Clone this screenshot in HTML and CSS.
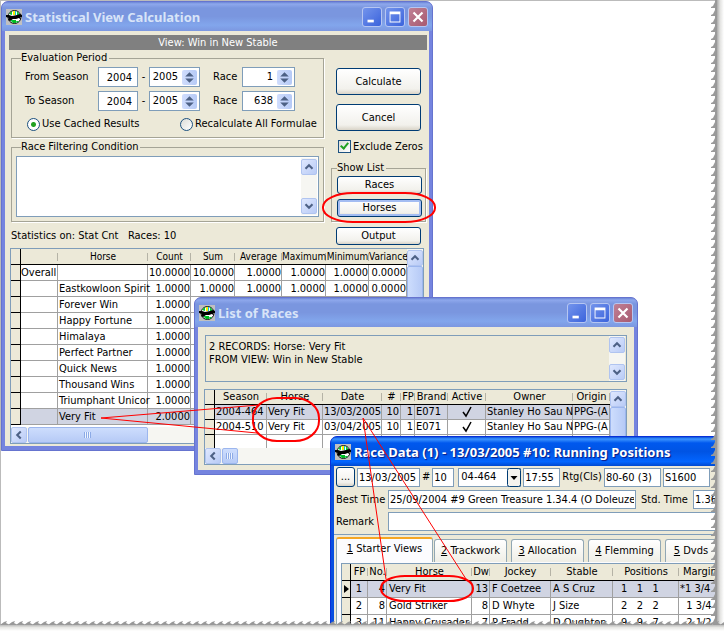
FILE: index.html
```
<!DOCTYPE html>
<html lang="en">
<head>
    <meta charset="UTF-8">
    <meta name="viewport" content="width=device-width, initial-scale=1.0">
    <title>Statistical View Calculation</title>
    <link rel="stylesheet" href="styles.css">
</head>
<body>

    <!-- shared icons -->
    <svg class="defs" width="0" height="0">
        <symbol id="app" viewBox="0 0 16 16">
            <rect width="16" height="16" fill="#c0c0c0"/>
            <circle cx="8.5" cy="8" r="6.5" fill="#fff" stroke="#111" stroke-width="1"/>
            <path d="M3 5l3-3v4zM11 2l3 4h-3zM4 11l3 3v-3zM10 12h3l-2 2z" fill="#0c3"/>
            <path d="M7 2h3v4H7z" fill="#fe0"/>
            <path d="M9 2h1v4H9z" fill="#0cd"/>
            <path d="M0 6l3 0 3 1 5-1 3-1 2 1v2l-2 0 1 3-2-2-3 1-3 0-3 2-2-1 1-2-3-1z" fill="#000"/>
            <path d="M7 11h3v3H7z" fill="#0b2"/>
        </symbol>
        <symbol id="min" viewBox="0 0 20 20"><path d="M5 13h7v3H5z" fill="#fff"/></symbol>
        <symbol id="max" viewBox="0 0 20 20"><path d="M4 4h12v12H4zM5 7v8h10V7z" fill="#fff" fill-rule="evenodd"/></symbol>
        <symbol id="close" viewBox="0 0 20 20"><path d="M5 5l10 10M15 5L5 15" stroke="#fff" stroke-width="2.4"/></symbol>
        <symbol id="up" viewBox="0 0 16 16"><path d="M4 10l4-4 4 4" fill="none" stroke="#4d6185" stroke-width="2.4"/></symbol>
        <symbol id="down" viewBox="0 0 16 16"><path d="M4 6l4 4 4-4" fill="none" stroke="#4d6185" stroke-width="2.4"/></symbol>
        <symbol id="left" viewBox="0 0 16 16"><path d="M10 4L6 8l4 4" fill="none" stroke="#4d6185" stroke-width="2.4"/></symbol>
        <symbol id="grip" viewBox="0 0 8 8"><path d="M.5 1v6M2.5 1v6M4.5 1v6M6.5 1v6" stroke="#8caae6"/><path d="M1.5 1v6M3.5 1v6M5.5 1v6" stroke="#eef4fe"/></symbol>
        <symbol id="spin" viewBox="0 0 14 14"><path d="M3 6l4-4 4 4zM3 8l4 4 4-4z" fill="#4d6185"/></symbol>
        <symbol id="tick" viewBox="0 0 12 12"><path d="M2 6l3 4 5-9" fill="none" stroke="#000" stroke-width="1.5"/></symbol>
    </svg>

    <main class="desktop">

        <section class="window calc">
            <header class="titlebar">
                <svg class="app-icon"><use href="#app"/></svg>
                <h1>Statistical View Calculation</h1>
                <button class="cap" aria-label="Minimize"><svg><use href="#min"/></svg></button>
                <button class="cap" aria-label="Maximize"><svg><use href="#max"/></svg></button>
                <button class="cap cap-close" aria-label="Close"><svg><use href="#close"/></svg></button>
            </header>
            <div class="window-body">
                <div class="view-bar">View: Win in New Stable</div>
                <div class="calc-main">
                    <div class="calc-left">
                        <fieldset class="period">
                            <legend>Evaluation Period</legend>
                            <div class="period-grid">
                                <label for="from1">From Season</label>
                                <input id="from1" class="num" value="2004">
                                <span>-</span>
                                <span class="spinner"><input aria-label="From season end" value="2005"><button aria-label="Change"><svg><use href="#spin"/></svg></button></span>
                                <label for="race1">Race</label>
                                <span class="spinner"><input id="race1" value="1"><button aria-label="Change"><svg><use href="#spin"/></svg></button></span>
                                <label for="to1">To Season</label>
                                <input id="to1" class="num" value="2004">
                                <span>-</span>
                                <span class="spinner"><input aria-label="To season end" value="2005"><button aria-label="Change"><svg><use href="#spin"/></svg></button></span>
                                <label for="race2">Race</label>
                                <span class="spinner"><input id="race2" value="638"><button aria-label="Change"><svg><use href="#spin"/></svg></button></span>
                            </div>
                            <div class="radios">
                                <label><input type="radio" name="mode" checked>Use Cached Results</label>
                                <label><input type="radio" name="mode">Recalculate All Formulae</label>
                            </div>
                        </fieldset>
                        <fieldset class="filter">
                            <legend>Race Filtering Condition</legend>
                            <div class="memo">
                                <textarea aria-label="Race Filtering Condition"></textarea>
                                <div class="vscroll">
                                    <button aria-label="Up"><svg><use href="#up"/></svg></button>
                                    <button aria-label="Down"><svg><use href="#down"/></svg></button>
                                </div>
                            </div>
                        </fieldset>
                        <p class="stats">Statistics on: Stat Cnt &nbsp; Races: 10</p>
                    </div>
                    <div class="calc-right">
                        <button class="btn tall">Calculate</button>
                        <button class="btn tall">Cancel</button>
                        <label class="check"><input type="checkbox" checked><span>Exclude Zeros</span></label>
                        <fieldset class="show-list">
                            <legend>Show List</legend>
                            <button class="btn">Races</button>
                            <button class="btn focused">Horses</button>
                        </fieldset>
                        <button class="btn">Output</button>
                    </div>
                </div>
                <div class="grid calc-grid">
                    <div class="grid-view">
                        <table>
                            <colgroup><col style="width:10px"><col style="width:37px"><col style="width:90px"><col style="width:43px"><col style="width:44px"><col style="width:47px"><col style="width:44px"><col style="width:43px"><col></colgroup>
                            <thead>
                                <tr><th></th><th></th><th>Horse</th><th>Count</th><th>Sum</th><th>Average</th><th>Maximum</th><th>Minimum</th><th>Variance</th></tr>
                            </thead>
                            <tbody>
                                <tr><td></td><td>Overall</td><td></td><td>10.0000</td><td>10.0000</td><td>1.0000</td><td>1.0000</td><td>1.0000</td><td>0.0000</td></tr>
                                <tr><td></td><td></td><td>Eastkowloon Spirit</td><td>1.0000</td><td>1.0000</td><td>1.0000</td><td>1.0000</td><td>1.0000</td><td>0.0000</td></tr>
                                <tr><td></td><td></td><td>Forever Win</td><td>1.0000</td><td></td><td></td><td></td><td></td><td></td></tr>
                                <tr><td></td><td></td><td>Happy Fortune</td><td>1.0000</td><td></td><td></td><td></td><td></td><td></td></tr>
                                <tr><td></td><td></td><td>Himalaya</td><td>1.0000</td><td></td><td></td><td></td><td></td><td></td></tr>
                                <tr><td></td><td></td><td>Perfect Partner</td><td>1.0000</td><td></td><td></td><td></td><td></td><td></td></tr>
                                <tr><td></td><td></td><td>Quick News</td><td>1.0000</td><td></td><td></td><td></td><td></td><td></td></tr>
                                <tr><td></td><td></td><td>Thousand Wins</td><td>1.0000</td><td></td><td></td><td></td><td></td><td></td></tr>
                                <tr><td></td><td></td><td>Triumphant Unicor</td><td>1.0000</td><td></td><td></td><td></td><td></td><td></td></tr>
                                <tr class="selected"><td></td><td></td><td>Very Fit</td><td>2.0000</td><td></td><td></td><td></td><td></td><td></td></tr>
                            </tbody>
                        </table>
                    </div>
                    <div class="vscroll">
                        <button aria-label="Up"><svg><use href="#up"/></svg></button>
                        <div class="thumb"></div>
                    </div>
                    <div class="hscroll">
                        <button aria-label="Left"><svg><use href="#left"/></svg></button>
                        <div class="thumb wide"><svg><use href="#grip"/></svg></div>
                    </div>
                </div>
            </div>
        </section>

        <section class="window races">
            <header class="titlebar">
                <svg class="app-icon"><use href="#app"/></svg>
                <h1>List of Races</h1>
                <button class="cap" aria-label="Minimize"><svg><use href="#min"/></svg></button>
                <button class="cap" aria-label="Maximize"><svg><use href="#max"/></svg></button>
                <button class="cap cap-close" aria-label="Close"><svg><use href="#close"/></svg></button>
            </header>
            <div class="window-body">
                <div class="summary">
                    <p>2 RECORDS: Horse: Very Fit<br>FROM VIEW: Win in New Stable</p>
                    <div class="vscroll">
                        <button aria-label="Up"><svg><use href="#up"/></svg></button>
                        <button aria-label="Down"><svg><use href="#down"/></svg></button>
                    </div>
                </div>
                <div class="grid races-grid">
                    <div class="grid-view">
                        <table>
                            <colgroup><col style="width:10px"><col style="width:52px"><col style="width:56px"><col style="width:59px"><col style="width:19px"><col style="width:14px"><col style="width:33px"><col style="width:38px"><col style="width:87px"><col></colgroup>
                            <thead>
                                <tr><th></th><th>Season</th><th>Horse</th><th>Date</th><th>#</th><th>FP</th><th>Brand</th><th>Active</th><th>Owner</th><th>Origin</th></tr>
                            </thead>
                            <tbody>
                                <tr class="selected"><td></td><td>2004-464</td><td>Very Fit</td><td>13/03/2005</td><td>10</td><td>1</td><td>E071</td><td><svg class="tick"><use href="#tick"/></svg></td><td>Stanley Ho Sau N</td><td>PPG-(A</td></tr>
                                <tr><td></td><td>2004-510</td><td>Very Fit</td><td>03/04/2005</td><td>10</td><td>1</td><td>E071</td><td><svg class="tick"><use href="#tick"/></svg></td><td>Stanley Ho Sau N</td><td>PPG-(A</td></tr>
                                <tr><td></td><td></td><td></td><td></td><td></td><td></td><td></td><td></td><td></td><td></td></tr>
                            </tbody>
                        </table>
                    </div>
                    <div class="vscroll">
                        <button aria-label="Up"><svg><use href="#up"/></svg></button>
                        <div class="thumb"></div>
                    </div>
                    <div class="hscroll">
                        <button aria-label="Left"><svg><use href="#left"/></svg></button>
                        <div class="thumb"><svg><use href="#grip"/></svg></div>
                    </div>
                </div>
            </div>
        </section>

        <section class="window active data">
            <header class="titlebar">
                <svg class="app-icon"><use href="#app"/></svg>
                <h1>Race Data (1) - 13/03/2005 #10: Running Positions</h1>
            </header>
            <div class="window-body">
                <div class="fields">
                    <button class="btn more">...</button>
                    <input class="w-date" aria-label="Date" value="13/03/2005">
                    <label for="raceno">#</label>
                    <input id="raceno" class="w-no" value="10">
                    <span class="combo">
                        <select aria-label="Race index"><option>04-464</option></select>
                        <svg class="combo-arrow" viewBox="0 0 14 19"><rect x=".5" y=".5" width="13" height="18" rx="2" fill="#f4f3ee" stroke="#003c74"/><path d="M3.500 8h7l-3.500 4z"/></svg>
                    </span>
                    <input class="w-time" aria-label="Time" value="17:55">
                    <label for="rtg">Rtg(Cls)</label>
                    <input id="rtg" class="w-rtg" value="80-60 (3)">
                    <input class="w-dist" aria-label="Distance" value="S1600">
                </div>
                <div class="fields">
                    <label class="lead" for="best">Best Time</label>
                    <input id="best" class="w-best" value="25/09/2004 #9 Green Treasure 1.34.4 (O Doleuze">
                    <label class="std" for="std">Std. Time</label>
                    <input id="std" class="w-rest" value="1.36.0">
                </div>
                <div class="fields">
                    <label class="lead" for="remark">Remark</label>
                    <input id="remark" class="w-rest">
                </div>
                <nav class="tabs">
                    <button class="tab current"><u>1</u> Starter Views</button>
                    <button class="tab"><u>2</u> Trackwork</button>
                    <button class="tab"><u>3</u> Allocation</button>
                    <button class="tab"><u>4</u> Flemming</button>
                    <button class="tab short"><u>5</u> Dvds</button>
                </nav>
                <div class="tab-page">
                    <div class="grid data-grid">
                        <table>
                            <colgroup><col style="width:9px"><col style="width:17px"><col style="width:19px"><col style="width:85px"><col style="width:18px"><col style="width:61px"><col style="width:62px"><col style="width:66px"><col></colgroup>
                            <thead>
                                <tr><th></th><th>FP</th><th>No.</th><th>Horse</th><th>Dw</th><th>Jockey</th><th>Stable</th><th>Positions</th><th>Margin</th></tr>
                            </thead>
                            <tbody>
                                <tr class="selected"><td><svg class="marker" viewBox="0 0 5 8"><path d="M0 0l5 4-5 4z"/></svg></td><td>1</td><td>4</td><td>Very Fit</td><td>13</td><td>F Coetzee</td><td>A S Cruz</td><td>1&nbsp;&nbsp; 1&nbsp;&nbsp; 1</td><td>*1 3/4</td></tr>
                                <tr><td></td><td>2</td><td>8</td><td>Gold Striker</td><td>8</td><td>D Whyte</td><td>J Size</td><td>2&nbsp;&nbsp; 2&nbsp;&nbsp; 2</td><td>&nbsp; 1 3/4</td></tr>
                                <tr><td></td><td>3</td><td>11</td><td>Happy Crusader</td><td>7</td><td>P Fradd</td><td>D Oughton</td><td>9&nbsp;&nbsp; 9&nbsp;&nbsp; 7</td><td>&nbsp; 2 1/2</td></tr>
                            </tbody>
                        </table>
                    </div>
                </div>
            </div>
        </section>

        <!-- red call-outs drawn over the windows -->
        <svg class="marks">
            <g fill="none" stroke="#f00" stroke-width="2">
                <rect x="323" y="193" width="112" height="29" rx="30" ry="14"/>
                <rect x="253" y="398" width="66" height="43" rx="24" ry="20"/>
                <rect x="381" y="576" width="92" height="25" rx="24" ry="12"/>
            </g>
            <path d="M259 405L101 418l156 15M386 579l-23-161 103 161" fill="none" stroke="#f00"/>
        </svg>
    </main>

    <!-- torn paper edge -->
    <svg class="torn-right">
        <defs>
            <linearGradient id="fade-x"><stop offset="0" stop-color="#999"/><stop offset=".5" stop-color="#e2e2e0"/><stop offset="1" stop-color="#fff"/></linearGradient>
            <pattern id="teeth-x" width="13" height="8" patternUnits="userSpaceOnUse">
                <path d="M5 0h8v8H5z" fill="url(#fade-x)"/>
                <path d="M4 0v2L3 4 2 6 0 7v1h6V0z" fill="#999"/>
            </pattern>
        </defs>
        <rect width="13" height="100%" fill="url(#teeth-x)"/>
    </svg>
    <svg class="torn-bottom">
        <defs>
            <linearGradient id="fade-y" x2="0" y2="1"><stop offset="0" stop-color="#aaa"/><stop offset=".5" stop-color="#e8e8e5"/><stop offset="1" stop-color="#fff"/></linearGradient>
            <pattern id="teeth-y" width="8" height="10" patternUnits="userSpaceOnUse">
                <path d="M0 3h8v7H0z" fill="url(#fade-y)"/>
                <path d="M0 4l4-3 3-1-1 2 2 1v1z" fill="#999"/>
            </pattern>
        </defs>
        <rect width="100%" height="10" fill="url(#teeth-y)"/>
    </svg>

</body>
</html>
```
FILE: styles.css
```
* {
    box-sizing: border-box;
}
body {
    margin: 0;
    height: 100vh;
    position: relative;
    overflow: hidden;
    padding: 0 8px 6px 0;
    background-color: #fff;
    color: #000;
    font-family: "DejaVu Sans Condensed", "DejaVu Sans", sans-serif;
    font-size: 11px;
    line-height: 14px;
}
button, input, select, textarea {
    font: inherit;
    color: inherit;
    margin: 0;
    padding: 0;
    border-radius: 0;
}
fieldset {
    margin: 0;
    min-width: 0;
    border: 1px solid #a5a496;
    box-shadow: 1px 1px 0 #fff;
}
legend {
    padding: 0 2px 0 0;
}
p {
    margin: 0;
}
.defs {
    position: absolute;
}
.desktop {
    position: relative;
    height: 100%;
    overflow: hidden;
    border-top: 1px solid #bbb;
    border-left: 1px solid #bbb;
}

/* windows */
.window {
    position: absolute;
    display: flex;
    flex-direction: column;
    padding: 0 3px 4px;
    background-color: #7584df;
    border: 1px solid #6674cf;
    border-radius: 7px 7px 0 0;
}
.calc {
    left: 0;
    top: 0;
    width: 432px;
    height: 450px;
}
.races {
    left: 193px;
    top: 296px;
    width: 444px;
    height: 178px;
}
.data {
    left: 329px;
    top: 435px;
    width: 445px;
    height: 240px;
    background-color: #0a50e0;
    border-color: #0831d9;
}
.titlebar {
    display: flex;
    align-items: center;
    gap: 3px;
    height: 29px;
    margin: 0 -3px;
    padding: 1px 4px 0;
    border-radius: 6px 6px 0 0;
    background: linear-gradient(#6b85d6, #8ea8ec 2px, #7a96df 6px, #7a96df 50%, #82a6ec 80%, #7c97e0);
}
.data .titlebar {
    background: linear-gradient(#0a50d8, #3d95ff 2px, #0058ee 6px, #0054e4 50%, #0265ff 85%, #0048cf);
}
.titlebar h1 {
    flex: 1;
    margin: 0;
    font: bold 13px/18px "Noto Sans", sans-serif;
    color: #d8e4f8;
    white-space: nowrap;
}
.data .titlebar h1 {
    color: #fff;
    text-shadow: 1px 1px 1px #0a1883;
}
.app-icon {
    width: 16px;
    height: 16px;
    flex: none;
}
.cap {
    width: 20px;
    height: 20px;
    border: 1px solid #b6c6f2;
    border-radius: 3px;
    background: linear-gradient(135deg, #7394ec, #3b63dc);
}
.cap-close {
    background: linear-gradient(135deg, #c08095, #a85a70);
}
.cap svg {
    display: block;
    width: 18px;
    height: 18px;
}
.window-body {
    flex: 1;
    min-height: 0;
    display: flex;
    flex-direction: column;
    background-color: #ece9d8;
}

/* buttons and fields */
.btn {
    display: block;
    width: 85px;
    height: 18px;
    border: 1px solid #003c74;
    border-radius: 3px;
    background: linear-gradient(#fff, #f2f1ec 80%, #d9d4c8);
    text-align: center;
}
.tall {
    height: 27px;
}
.focused {
    box-shadow: inset 0 0 0 2px #a4bdf2;
}
input, select, .spinner, .memo {
    border: 1px solid #7f9db9;
    background-color: #fff;
}
.spinner {
    display: flex;
    align-items: center;
    height: 20px;
    padding-right: 2px;
}
.spinner input {
    flex: 1;
    width: 0;
    border: 0;
    background: none;
    text-align: right;
    padding-right: 4px;
}
.spinner button {
    width: 15px;
    height: 15px;
    border: 0;
    border-radius: 2px;
    background: linear-gradient(90deg, #d0ddfd, #b6caf6);
}
.spinner svg {
    display: block;
    width: 15px;
    height: 15px;
}

/* scroll bars */
.vscroll {
    display: flex;
    flex-direction: column;
    justify-content: space-between;
    flex: none;
    width: 16px;
    padding: 1px 0;
    background-color: #f6f6f2;
}
.vscroll button, .hscroll button {
    width: 16px;
    height: 16px;
    flex: none;
    border: 1px solid #b0c4f0;
    border-radius: 2px;
    background: linear-gradient(135deg, #dfe8fe, #b9cbf6);
}
.vscroll svg, .hscroll button svg {
    display: block;
    width: 14px;
    height: 14px;
}
.thumb {
    flex: 1;
    border: 1px solid #9cb6ee;
    border-radius: 2px;
    background: linear-gradient(90deg, #cdddfd, #b6caf6);
}
.hscroll {
    display: flex;
    grid-column: 1 / -1;
    height: 16px;
    gap: 1px;
    background-color: #f6f6f2;
}
.hscroll .thumb {
    flex: none;
    width: 16px;
    display: flex;
    align-items: center;
    justify-content: center;
    background: linear-gradient(#cdddfd, #b6caf6);
}
.hscroll .wide {
    width: 120px;
}
.hscroll .thumb svg {
    width: 8px;
    height: 8px;
}

/* calculation window */
.view-bar {
    margin: 4px 2px 1px 4px;
    line-height: 15px;
    background-color: #808080;
    color: #fff;
    text-align: center;
}
.calc-main {
    display: flex;
    gap: 7px;
    padding: 0 3px 0 6px;
}
.calc-left {
    flex: 1;
    min-width: 0;
}
.period {
    height: 87px;
    padding: 2px 9px 0;
}
.period-grid {
    display: grid;
    grid-template-columns: 73px 40px 11px 51px 42px 53px;
    grid-template-rows: 20px 20px;
    row-gap: 4px;
    align-items: center;
    padding-left: 4px;
    white-space: nowrap;
}
.period-grid > span:not(.spinner) {
    text-align: center;
}
.period-grid > label:nth-of-type(even) {
    padding-left: 13px;
}
.num {
    width: 40px;
    height: 20px;
    padding-right: 5px;
    text-align: right;
}
.radios {
    display: grid;
    grid-template-columns: 153px auto;
    padding: 6px 0 0 6px;
    white-space: nowrap;
}
.radios label {
    display: flex;
    align-items: center;
    gap: 2px;
}
input[type="radio"], input[type="checkbox"] {
    appearance: none;
    flex: none;
    width: 13px;
    height: 13px;
    border: 1px solid #1c5180;
    background: linear-gradient(135deg, #dcdcd7, #fff);
}
input[type="radio"] {
    border-radius: 50%;
}
input[type="radio"]:checked {
    background: radial-gradient(circle, #21a121 2px, #fff 3px);
}
.filter {
    height: 82px;
    margin-top: 2px;
    padding: 2px 4px 4px;
}
.filter legend {
    margin-left: 5px;
}
.memo {
    display: flex;
    height: 61px;
    padding: 1px;
}
.memo textarea {
    flex: 1;
    border: 0;
    resize: none;
    background: none;
}
.stats {
    margin-top: 7px;
    padding-bottom: 5px;
}
.calc-right {
    width: 95px;
    padding: 17px 5px 0;
}
.calc-right .tall + .tall {
    margin-top: 9px;
}
.check {
    display: flex;
    gap: 2px;
    margin: 9px -4px 7px 2px;
    line-height: 14px;
    white-space: nowrap;
}
.check input {
    position: relative;
    border-radius: 0;
}
.check input::after {
    content: "";
    position: absolute;
    left: 3px;
    top: 0;
    width: 3px;
    height: 6px;
    border: solid #21a121;
    border-width: 0 2px 2px 0;
    transform: rotate(40deg);
}
.show-list {
    margin: 0 -5px 5px;
    padding: 1px 5px 4px 5px;
    height: 61px;
}
.show-list .btn + .btn {
    margin-top: 5px;
}

/* data grids */
.grid {
    display: grid;
    grid-template-columns: 1fr 16px;
    border: 1px solid #7f9db9;
    background-color: #fff;
}
.grid-view {
    min-width: 0;
    overflow: hidden;
}
table {
    width: 100%;
    table-layout: fixed;
    border-collapse: separate;
    border-spacing: 0;
}
th, td {
    height: 16px;
    padding: 0 2px;
    white-space: nowrap;
    line-height: 15px;
}
th {
    padding: 0;
    font-weight: normal;
    background: linear-gradient(#b5b3a6, #b5b3a6) right center / 1px 8px no-repeat #ece9d8;
    border-bottom: 1px solid #000;
}
td {
    text-align: left;
    border-right: 1px solid #a0a0a0;
    border-bottom: 1px solid #a0a0a0;
}
th:first-child, td:first-child {
    padding: 0;
    background: #ece9d8;
    border-right: 1px solid #000;
    border-bottom-color: #000;
}
.selected td {
    background-color: #d0d4e2;
}
.selected td:first-child {
    background-color: #ece9d8;
}
.calc-grid {
    height: 196px;
    margin: 0 5px 0 5px;
    grid-template-rows: 1fr 16px;
}
.calc-grid th {
    font-size: 10px;
}
.calc-grid td {
    padding: 0 1px;
}
.calc-grid td:nth-child(2) {
    padding: 0;
}
.calc-grid td:nth-child(n+4) {
    padding: 0;
    text-align: right;
}
.summary {
    display: flex;
    justify-content: space-between;
    margin: 8px 7px 7px;
    height: 47px;
    padding-right: 1px;
    border: 1px solid #7f9db9;
}
.summary p {
    padding: 4px 3px 3px;
    line-height: 13px;
}
.races-grid {
    height: 76px;
    margin: 0 7px 0 6px;
    grid-template-rows: 1fr 16px;
}
.races-grid th, .races-grid td {
    height: 15px;
    line-height: 14px;
}
.races-grid td {
    padding: 0 1px;
}
.races-grid td:nth-child(6), .races-grid td:nth-child(5) {
    text-align: right;
}
.races-grid td:nth-child(8) {
    text-align: center;
}
.tick {
    display: inline-block;
    width: 12px;
    height: 12px;
    vertical-align: middle;
}

/* race data window */
.fields {
    display: flex;
    align-items: center;
    gap: 2px;
    padding: 1px 0 2px 2px;
    white-space: nowrap;
}
.fields input {
    height: 19px;
    padding: 0 1px;
    min-width: 0;
}
.more {
    width: 19px;
    height: 20px;
}
.fields .w-date {
    width: 63px;
}
.w-no {
    width: 22px;
}
.combo {
    position: relative;
    display: flex;
    margin-left: 2px;
}
.combo select {
    appearance: none;
    width: 63px;
    height: 19px;
    padding: 0 2px;
}
.combo-arrow {
    position: absolute;
    right: 0;
    top: 0;
    width: 14px;
    height: 19px;
    pointer-events: none;
}
.w-time {
    width: 37px;
}
.w-rtg {
    width: 57px;
}
.w-dist {
    width: 47px;
}
.lead {
    width: 50px;
}
.w-best {
    width: 248px;
}
.std {
    width: 53px;
    padding-left: 3px;
}
.w-rest {
    flex: 1;
}
.tabs {
    display: flex;
    align-items: flex-end;
    gap: 4px;
    height: 28px;
    margin-top: 1px;
    padding: 2px 2px 0;
    border-top: 1px solid #7f9db9;
}
.tab {
    width: 73px;
    height: 23px;
    border: 1px solid #91a7b4;
    border-bottom: 0;
    border-radius: 3px 3px 0 0;
    background: linear-gradient(#fff, #efeee6);
    white-space: nowrap;
}
.current {
    width: 97px;
    height: 25px;
    margin-right: -3px;
    padding-bottom: 3px;
    border-top: 2px solid #f5a623;
    background: #fcfcfe;
}
.short {
    width: 52px;
}
.tab-page {
    flex: 1;
    margin-left: 2px;
    padding: 1px 0 0 4px;
    background-color: #fcfcfe;
    border-left: 1px solid #91a7b4;
}
.data-grid {
    display: block;
}
.data-grid th, .data-grid td {
    height: 17px;
    line-height: 16px;
}
.data-grid td:nth-child(2) {
    text-align: center;
}
.data-grid td:nth-child(8) {
    padding-left: 8px;
    word-spacing: normal;
}
.data-grid td:nth-child(3), .data-grid td:nth-child(5) {
    text-align: right;
    padding: 0 1px;
}
.data-grid th:last-child {
    text-align: left;
    padding-left: 4px;
}
.data-grid td:last-child {
    padding-left: 1px;
}
.marker {
    display: block;
    width: 5px;
    height: 8px;
    margin: auto;
}

/* overlays */
.marks {
    position: absolute;
    left: -1px;
    top: -1px;
    width: 100%;
    height: 100%;
    pointer-events: none;
}
.torn-right {
    position: absolute;
    right: 0;
    top: 0;
    width: 13px;
    height: 100%;
}
.torn-bottom {
    position: absolute;
    left: 0;
    bottom: 0;
    width: 100%;
    height: 10px;
}
```
